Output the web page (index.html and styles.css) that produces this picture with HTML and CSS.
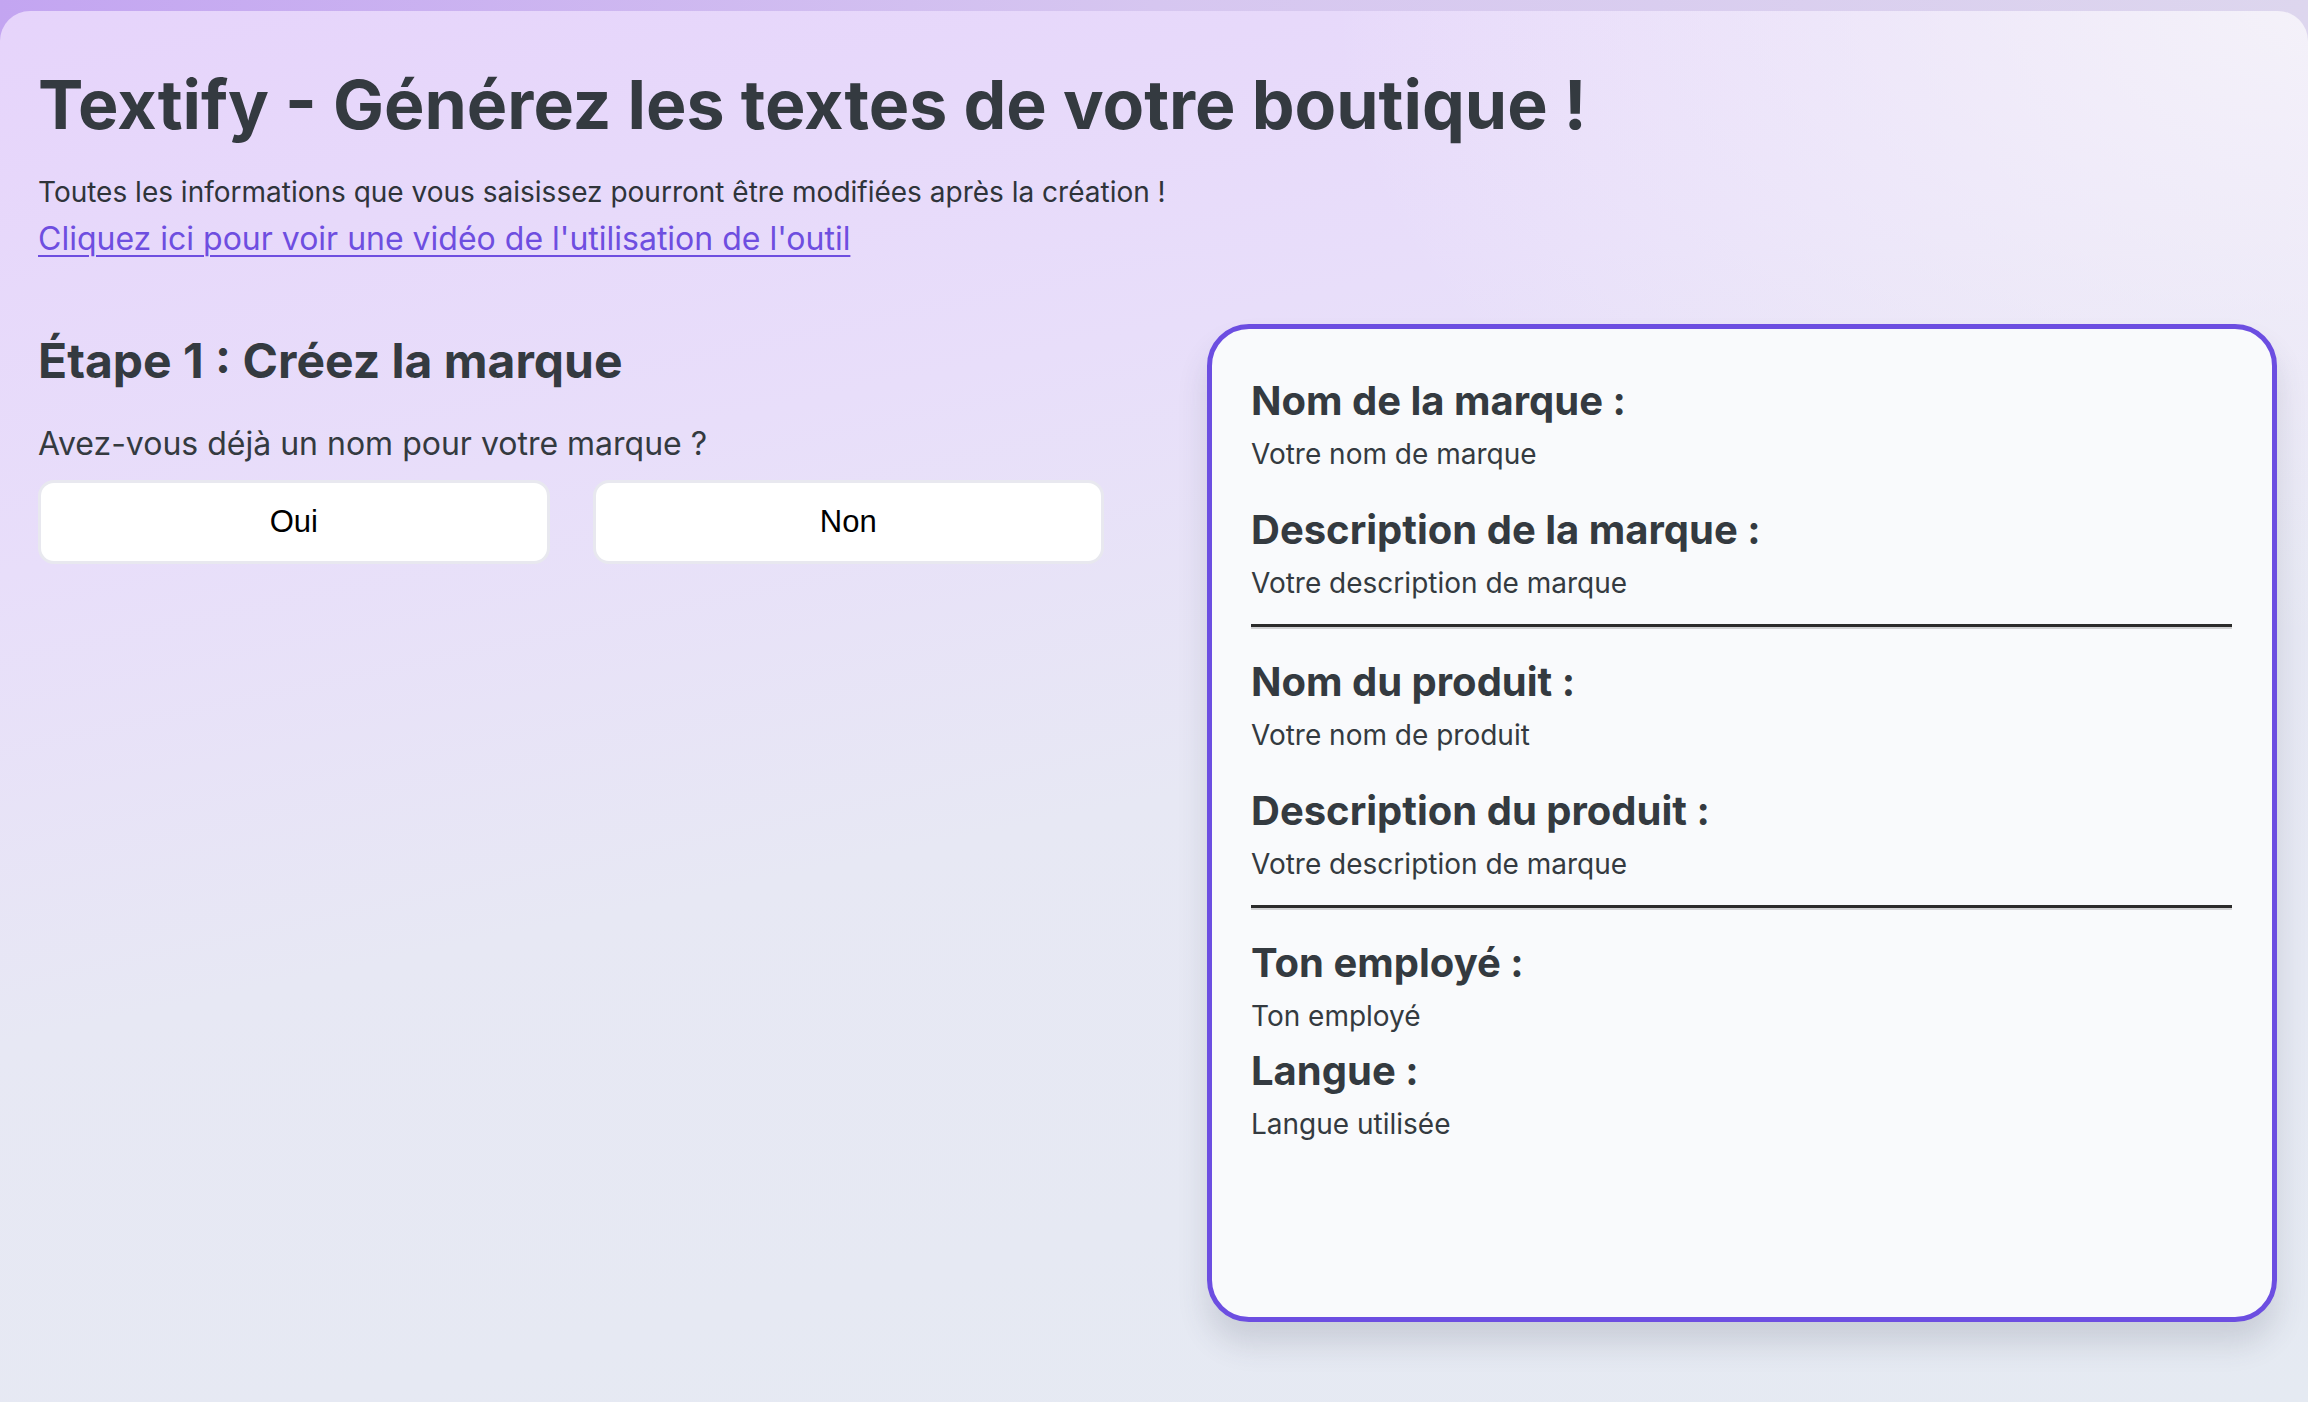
FILE: index.html
```html
<!DOCTYPE html>
<html lang="fr">
<head>
    <meta charset="UTF-8">
    <meta name="viewport" content="width=device-width, initial-scale=1.0">
    <title>Textify</title>
    <link rel="stylesheet" href="styles.css">
</head>
<body>
    <div class="page">
        <h1 class="title">Textify - Générez les textes de votre boutique !</h1>
        <p class="subtitle">Toutes les informations que vous saisissez pourront être modifiées après la création !</p>
        <a class="video-link" href="#">Cliquez ici pour voir une vidéo de l'utilisation de l'outil</a>

        <div class="layout">
            <div class="steps">
                <h2 class="step-title">Étape 1 : Créez la marque</h2>
                <p class="question">Avez-vous déjà un nom pour votre marque ?</p>
                <div class="choices">
                    <button class="choice">Oui</button>
                    <button class="choice">Non</button>
                </div>
            </div>

            <div class="summary">
                <h3 class="field-label">Nom de la marque :</h3>
                <p class="field-value">Votre nom de marque</p>
                <h3 class="field-label">Description de la marque :</h3>
                <p class="field-value">Votre description de marque</p>
                <hr class="divider">
                <h3 class="field-label">Nom du produit :</h3>
                <p class="field-value">Votre nom de produit</p>
                <h3 class="field-label">Description du produit :</h3>
                <p class="field-value">Votre description de marque</p>
                <hr class="divider">
                <h3 class="field-label">Ton employé :</h3>
                <p class="field-value">Ton employé</p>
                <h3 class="field-label field-label--tight">Langue :</h3>
                <p class="field-value">Langue utilisée</p>
            </div>
        </div>
    </div>
</body>
</html>
```

FILE: styles.css
```css
body {
    margin: 0;
    padding: 0;
    font-family: Inter, "Noto Sans", sans-serif;
    color: #343a40;
    background: linear-gradient(90deg, #c3a5f1 0%, #d6c6f0 50%, #ddd6ee 100%);
    overflow: hidden;
}
.page {
    margin-top: 11px;
    min-height: 1391px;
    box-sizing: border-box;
    padding: 53px 31px 0 38px;
    border-radius: 30px 30px 0 0;
    background:
        radial-gradient(ellipse 1400px 900px at 100% 0%, rgba(246, 245, 249, 0.85), rgba(246, 245, 249, 0) 70%),
        linear-gradient(168deg, #e6d4fb 0%, #e8defa 30%, #e7e8f4 55%, #e5eaf2 100%);
}
.title {
    margin: 0;
    font-size: 68px;
    line-height: 1.2;
    font-weight: 700;
    color: #343a40;
}
.subtitle {
    margin: 30px 0 0;
    font-size: 28px;
    line-height: 1.2;
    color: #2f343a;
}
.video-link {
    display: inline-block;
    margin-top: 11px;
    font-size: 32px;
    line-height: 1.2;
    color: #6e4ee0;
    text-decoration: underline;
    text-decoration-thickness: 2px;
    text-underline-offset: 5px;
}
.layout {
    display: flex;
    align-items: flex-start;
    gap: 103px;
    margin-top: 65px;
}
.steps {
    flex: 1;
}
.step-title {
    margin: 8px 0 0;
    font-size: 48px;
    line-height: 1.2;
    font-weight: 700;
    color: #343a40;
}
.question {
    margin: 36px 0 0;
    font-size: 32px;
    line-height: 1.2;
    color: #343a40;
}
.choices {
    display: flex;
    gap: 43px;
    margin-top: 16px;
}
.choice {
    flex: 1;
    height: 84px;
    background-color: #fff;
    border: 3px solid #e8e8ef;
    border-radius: 16px;
    font-family: "Liberation Sans", Arial, sans-serif;
    font-size: 31px;
    color: #000;
    cursor: pointer;
}
.summary {
    width: 1070px;
    box-sizing: border-box;
    min-height: 998px;
    padding: 48px 40px 40px 39px;
    background-color: #f9fafc;
    border: 5px solid #6c4ee1;
    border-radius: 42px;
    box-shadow: 0 22px 30px rgba(60, 70, 90, 0.16);
}
.field-label {
    margin: 35px 0 0;
    font-size: 40px;
    line-height: 1.2;
    font-weight: 700;
    color: #343a40;
}
.field-label:first-child,
.divider + .field-label {
    margin-top: 0;
}
.field-label--tight {
    margin-top: 13px;
}
.field-value {
    margin: 13px 0 0;
    font-size: 28px;
    line-height: 1.2;
    color: #343a40;
}
.divider {
    margin: 23px 0 29px;
    height: 0;
    border: none;
    border-top: 3px solid #2b2b2b;
    border-bottom: 2px solid #d2d2d4;
}
```
